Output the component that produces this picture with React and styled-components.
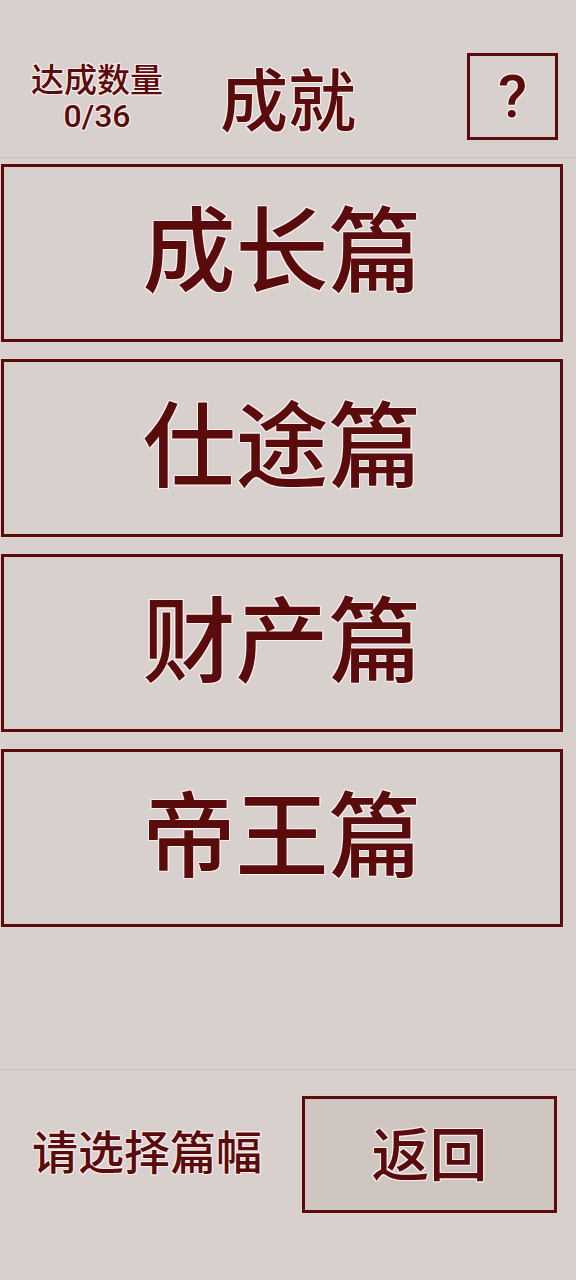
import React from "react";
import styled, { createGlobalStyle } from "styled-components";

const ink = "#5a0b0b";
const paper = "#d8d0cc";
const halo =
  "1px 0 0 #fbeeee, -1px 0 0 #fbeeee, 0 1px 0 #fbeeee, 0 -1px 0 #fbeeee, 1px 1px 0 #fbeeee, -1px -1px 0 #fbeeee, 1px -1px 0 #fbeeee, -1px 1px 0 #fbeeee";

const Global = createGlobalStyle`
  html, body {
    margin: 0;
    padding: 0;
    background: ${paper};
  }
  body {
    font-family: "Noto Sans CJK SC", "Noto Sans", Roboto, sans-serif;
    color: ${ink};
  }
  * { box-sizing: border-box; }
`;

const Screen = styled.div`
  min-height: 1280px;
  display: flex;
  flex-direction: column;
  background: ${paper};
`;

const Header = styled.header`
  height: 158px;
  padding-top: 36px;
  display: grid;
  grid-template-columns: 194px 1fr 194px;
  align-items: center;
  border-bottom: 1px solid #c8c0bc;
`;

const Counter = styled.div`
  display: flex;
  flex-direction: column;
  align-items: center;
  gap: 2px;
  text-shadow: ${halo};
`;

const CounterLabel = styled.span`
  display: block;
  font-size: 33px;
  line-height: 36px;
  font-weight: 500;
`;

const Digits = styled.span`
  display: block;
  font-family: Roboto, "Noto Sans", sans-serif;
  font-size: 32px;
  line-height: 36px;
  font-weight: 500;
`;

const Title = styled.h1`
  margin: 0;
  text-align: center;
  font-size: 68px;
  line-height: 1;
  font-weight: 500;
  text-shadow: ${halo};
`;

const HelpButton = styled.button`
  justify-self: end;
  margin-right: 18px;
  width: 91px;
  height: 87px;
  background: transparent;
  border: 3px solid ${ink};
  color: ${ink};
  font-family: Roboto, "Noto Sans", sans-serif;
  font-size: 60px;
  font-weight: 500;
  line-height: 1;
  padding: 0;
  text-shadow: ${halo};
`;

const Chapters = styled.main`
  flex: 1;
  display: flex;
  flex-direction: column;
  gap: 17px;
  padding: 6px 13px 0 1px;
`;

const Chapter = styled.button`
  height: 178px;
  width: 100%;
  background: transparent;
  border: 3px solid ${ink};
  box-shadow: 0 0 0 1px rgba(255, 215, 215, 0.35);
  color: ${ink};
  font-family: "Noto Sans CJK SC", sans-serif;
  font-size: 93px;
  font-weight: 500;
  line-height: 1;
  padding: 0 0 18px;
  text-shadow: ${halo};
`;

const Footer = styled.footer`
  height: 211px;
  border-top: 1px solid #c8c0bc;
  display: flex;
  align-items: flex-start;
  justify-content: space-between;
  padding: 26px 19px 0 32px;
`;

const Prompt = styled.span`
  height: 117px;
  display: flex;
  align-items: center;
  padding-bottom: 12px;
  font-size: 46px;
  font-weight: 500;
  text-shadow: ${halo};
`;

const BackButton = styled.button`
  width: 255px;
  height: 117px;
  background: #cfc6c2;
  border: 3px solid ${ink};
  box-shadow: 0 0 0 1px rgba(255, 215, 215, 0.35);
  color: ${ink};
  font-family: "Noto Sans CJK SC", sans-serif;
  font-size: 58px;
  font-weight: 500;
  line-height: 1;
  padding: 0 0 8px;
  text-shadow: ${halo};
`;

const chapters = ["成长篇", "仕途篇", "财产篇", "帝王篇"];

export default function App() {
  return (
    <Screen>
      <Global />
      <Header>
        <Counter>
          <CounterLabel>达成数量</CounterLabel>
          <Digits>0/36</Digits>
        </Counter>
        <Title>成就</Title>
        <HelpButton>?</HelpButton>
      </Header>
      <Chapters>
        {chapters.map((name) => (
          <Chapter key={name}>{name}</Chapter>
        ))}
      </Chapters>
      <Footer>
        <Prompt>请选择篇幅</Prompt>
        <BackButton>返回</BackButton>
      </Footer>
    </Screen>
  );
}
